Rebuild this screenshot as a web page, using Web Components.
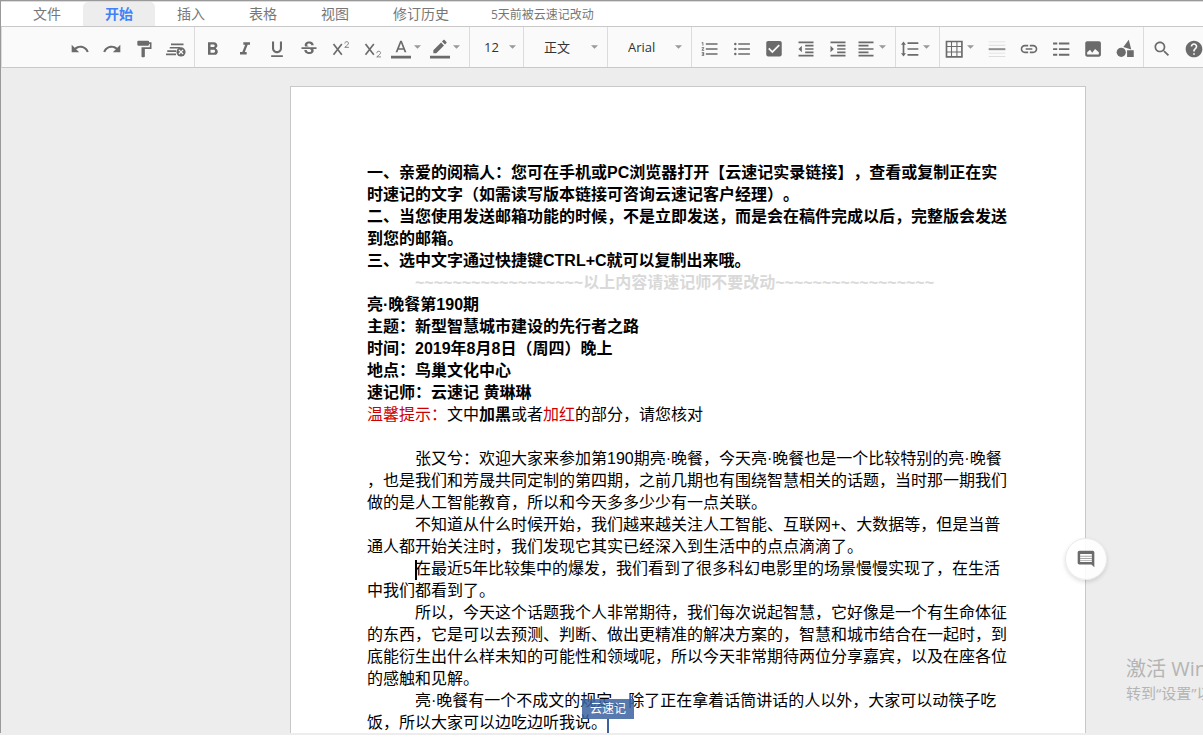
<!DOCTYPE html>
<html lang="zh-CN">
<head>
<meta charset="utf-8">
<title>亮·晚餐第190期</title>
<style>
  html, body {
    height: 100%;
    margin: 0;
  }

  body {
    overflow: hidden;
    font-family: "Open Sans", "Noto Sans CJK SC", sans-serif;
    text-spacing-trim: space-all;
    text-autospace: no-autospace;
  }
</style>
</head>
<body>
<doc-app></doc-app>

<script>
const ICONS = {
  undo: `<path d="M12.5 8c-2.65 0-5.05.99-6.9 2.6L2 7v9h9l-3.62-3.62c1.39-1.16 3.16-1.88 5.12-1.88 3.54 0 6.55 2.31 7.6 5.5l2.37-.78C21.08 11.03 17.15 8 12.5 8z"/>`,
  redo: `<path d="M18.4 10.6C16.55 8.99 14.15 8 11.5 8c-4.65 0-8.58 3.03-9.96 7.22L3.9 16c1.05-3.19 4.05-5.5 7.6-5.5 1.95 0 3.73.72 5.12 1.88L13 16h9V7l-3.6 3.6z"/>`,
  paint: `<path d="M18 4V3c0-.55-.45-1-1-1H5c-.55 0-1 .45-1 1v4c0 .55.45 1 1 1h12c.55 0 1-.45 1-1V6h1v4H9v11c0 .55.45 1 1 1h2c.55 0 1-.45 1-1v-9h8V4h-3z"/>`,
  clear: `<path d="M6 5.500h15v2H6zM4.500 9.500H17v2H4.500zM1.500 13.500H12v2H1.500zM0 17.500h12v2H0z"/><circle cx="18" cy="15.500" r="5.500"/><path d="M15.500 13l5 5m0-5l-5 5" stroke="#fafafa" stroke-width="1.500"/>`,
  bold: `<path d="M15.600 10.790c.97-.67 1.650-1.770 1.650-2.790 0-2.260-1.750-4-4-4H6v15h8.040c2.090 0 3.710-1.700 3.710-3.790 0-1.520-.86-2.820-2.150-3.420zM9 6.500h3.500c.83 0 1.500.67 1.500 1.500s-.67 1.500-1.500 1.500H9v-3zm4 10H9v-3.500h4c.83 0 1.500.67 1.500 1.750s-.67 1.750-1.500 1.750z"/>`,
  italic: `<path d="M10 4v3h2.210l-3.420 8.500H6v3h8v-3h-2.210l3.420-8.500H18V4z"/>`,
  underline: `<path d="M12 17c3.310 0 6-2.690 6-6V3h-2.500v8c0 1.930-1.570 3.500-3.500 3.500S8.500 12.930 8.500 11V3H6v8c0 3.310 2.690 6 6 6zm-7 2.500v2.200h14v-2.200H5z"/>`,
  strike: `<path d="M7.240 8.750c-.26-.48-.39-1.030-.39-1.670 0-.61.130-1.160.4-1.670.26-.5.630-.93 1.110-1.290.48-.35 1.050-.63 1.700-.83.66-.19 1.390-.29 2.180-.29.81 0 1.540.110 2.210.34.66.22 1.230.54 1.690.94.47.4.830.88 1.080 1.430s.38 1.150.38 1.810h-3.010c0-.31-.05-.59-.15-.85-.09-.27-.24-.49-.44-.68-.2-.19-.45-.33-.75-.44-.3-.1-.66-.16-1.060-.16-.39 0-.74.04-1.030.13s-.53.21-.72.36c-.19.16-.34.34-.44.55-.1.210-.15.430-.15.660 0 .48.25.88.74 1.210.38.250.770.480 1.410.7H7.390c-.05-.08-.11-.17-.15-.25zM21 12v-2H3v2h9.620c.18.070.4.140.55.200.37.170.660.340.870.510s.350.360.430.570c.070.200.110.430.110.690 0 .23-.05.45-.14.660-.09.200-.23.380-.42.530-.19.150-.42.260-.71.350-.29.080-.63.130-1.010.130-.43 0-.83-.04-1.180-.13s-.66-.23-.91-.42c-.25-.19-.45-.44-.59-.75s-.25-.76-.25-1.210H6.400c0 .55.080 1.130.24 1.580s.37.850.65 1.210c.28.350.600.660.980.920.37.260.780.480 1.220.650.44.170.900.300 1.380.390.480.080.960.130 1.440.130.8 0 1.530-.09 2.180-.28s1.210-.45 1.670-.79c.46-.34.820-.77 1.070-1.270s.38-1.070.38-1.710c0-.6-.1-1.140-.31-1.610-.05-.11-.11-.23-.17-.33H21z"/>`,
  sup: `<path d="M3 6l10 13M13 6L3 19" fill="none" stroke="currentColor" stroke-width="2"/><path d="M16.500 5.500c0-3 4.500-3 4.500-.5 0 1.500-1.500 2.500-4.500 5h5" fill="none" stroke="currentColor"/>`,
  sub: `<path d="M3 6l10 13M13 6L3 19" fill="none" stroke="currentColor" stroke-width="2"/><path d="M16.500 17c0-3 4.500-3 4.500-.5 0 1.500-1.500 2.500-4.500 5h5" fill="none" stroke="currentColor"/>`,
  color: `<path d="M0 20h24v3.500H0zM11 2L5.500 16h2.250l1.120-3h6.250l1.120 3h2.250L13 2h-2zm-1.380 9L12 4.670 14.380 11H9.620z"/>`,
  marker: `<path d="M0 20h24v3.500H0zM4 13.500V17h3.500l9.300-9.300-3.500-3.500zM19.700 4.900c.4-.4.4-1 0-1.400l-2.200-2.200c-.4-.4-1-.4-1.400 0l-1.700 1.700 3.600 3.600z"/>`,
  ordered: `<path d="M2 17h2v.5H3v1h1v.5H2v1h3v-4H2v1zm1-9h1V4H2v1h1v3zm-1 3h1.800L2 13.100v.9h3v-1H3.200L5 10.900V10H2v1zm5-6v2h14V5H7zm0 14h14v-2H7v2zm0-6h14v-2H7v2z"/>`,
  bullets: `<circle cx="4" cy="6" r="1.500"/><circle cx="4" cy="12" r="1.500"/><circle cx="4" cy="18" r="1.500"/><path d="M7.500 5h14v2h-14zM7.500 11h14v2h-14zM7.500 17h14v2h-14z"/>`,
  check: `<path d="M19 2.500H5c-1.300 0-2.300 1-2.300 2.200v14c0 1.300 1 2.300 2.300 2.300h14c1.300 0 2.300-1 2.300-2.300v-14c0-1.200-1-2.200-2.300-2.200zM10 17l-5-5 1.410-1.410L10 14.170l7.590-7.590L19 8l-9 9z"/>`,
  outdent: `<path d="M11 17h10v-2H11v2zm-8-5l4 4V8l-4 4zm0 9h18v-2H3v2zM3 3v2h18V3H3zm8 6h10V7H11v2zm0 4h10v-2H11v2z"/>`,
  indent: `<path d="M3 21h18v-2H3v2zM3 8v8l4-4-4-4zm8 9h10v-2H11v2zM3 3v2h18V3H3zm8 6h10V7H11v2zm0 4h10v-2H11v2z"/>`,
  align: `<path d="M15 15H3v2h12v-2zm0-8H3v2h12V7zM3 13h18v-2H3v2zm0 8h18v-2H3v2zM3 3v2h18V3H3z"/>`,
  spacing: `<path d="M5.200 7h2L4.200 3l-3 4h2v10h-2l3 4 3-4h-2zM9 4h13v2H9zM9 11h13v2H9zM9 18h13v2H9z"/>`,
  table: `<path d="M3 3h18.500v18.500H3z" fill="none" stroke="currentColor" stroke-width="2"/><path d="M3 9h18.500M3 15.500h18.500M9 3v18.500M15.500 3v18.500" fill="none" stroke="currentColor" stroke-width="1.300"/>`,
  rule: `<path d="M2 11h20v2.400H2z" opacity=".75"/><path d="M2 3h20v1H2zM2 7h20v1H2zM2 16.500h20v1H2zM2 20.500h20v1H2z" opacity=".2"/>`,
  link: `<path d="M3.900 12c0-1.710 1.390-3.100 3.100-3.100h4V7H7c-2.760 0-5 2.240-5 5s2.240 5 5 5h4v-1.900H7c-1.710 0-3.100-1.390-3.100-3.100zM8 13h8v-2H8v2zm9-6h-4v1.900h4c1.710 0 3.100 1.390 3.100 3.100s-1.390 3.100-3.100 3.100h-4V17h4c2.760 0 5-2.240 5-5s-2.240-5-5-5z"/>`,
  catalog: `<path d="M2.500 4.200h5v2.300h-5zM9.500 4.200H22v2.300H9.500zM2.500 11h5v2.300h-5zM9.500 11H22v2.300H9.500zM2.500 17.800h5v2.300h-5zM9.500 17.800H22v2.300H9.500z"/>`,
  image: `<path fill-rule="evenodd" d="M21.500 19V5c0-1.300-1-2.300-2.300-2.300H5C3.700 2.700 2.700 3.700 2.700 5v14c0 1.300 1 2.300 2.300 2.300h14.200c1.300 0 2.300-1 2.300-2.300zM5 18.500v-2.500l3.500-3 2.500 3.500 3.500-4.500L19 16v2.500z"/>`,
  shapes: `<path d="M16.500 1l3 11.500L10 9.500zM14.500 13.500h8v8h-8z"/><circle cx="7.500" cy="16" r="5.500"/>`,
  search: `<path d="M15.500 14h-.79l-.28-.27C15.410 12.590 16 11.110 16 9.500 16 5.910 13.090 3 9.500 3S3 5.910 3 9.500 5.910 16 9.500 16c1.610 0 3.090-.59 4.230-1.570l.27.28v.79l5 4.990L20.490 19l-4.990-5zm-6 0C7.010 14 5 11.990 5 9.500S7.010 5 9.500 5 14 7.010 14 9.500 11.990 14 9.500 14z"/>`,
  help: `<path d="M12 2C6.480 2 2 6.480 2 12s4.480 10 10 10 10-4.480 10-10S17.520 2 12 2zm1 17h-2v-2h2v2zm2.070-7.750l-.9.920C13.450 12.900 13 13.500 13 15h-2v-.5c0-1.100.45-2.100 1.170-2.830l1.240-1.260c.37-.36.590-.86.590-1.410 0-1.100-.9-2-2-2s-2 .9-2 2H8c0-2.210 1.790-4 4-4s4 1.790 4 4c0 .88-.36 1.680-.93 2.250z"/>`,
  comment: `<path fill-rule="evenodd" d="M22 4c0-1.100-.9-2-2-2H4c-1.100 0-2 .9-2 2v12.500c0 1.100.9 2 2 2h14.500L22 22zM19 6v9.500H5V6z"/><path d="M5 8h14v1.300H5zM5 10.800h14v1.300H5zM5 13.500h14v1H5z" opacity=".6"/>`
};

const CARET = `<svg class="caret" viewBox="0 0 8 4" aria-hidden="true"><path d="M0 0h8L4 4z"/></svg>`;

class DocTabs extends HTMLElement {
  constructor() {
    super();
    this.attachShadow({ mode: "open" });
  }

  static get styles() {
    return /* css */`
      :host {
        display: flex;
        align-items: stretch;
        height: 24px;
        padding-left: 10px;
        background: #fff;
        border-bottom: 1px solid #c8c8c8;
        white-space: nowrap;
      }

      button {
        border: 0;
        margin: 0;
        padding: 0 22px;
        background: none;
        color: #777;
        font: 14px/24px "Open Sans", "Noto Sans CJK SC", sans-serif;
        cursor: pointer;
      }

      button[aria-selected="true"] {
        background: #ededed;
        border-radius: 5px 5px 0 0;
        color: #3f82f8;
        font-weight: 700;
      }

      nav {
        display: flex;
      }

      span {
        margin-left: 20px;
        color: #777;
        font-size: 12px;
        line-height: 26px;
      }
    `;
  }

  connectedCallback() {
    const tabs = ["文件", "开始", "插入", "表格", "视图", "修订历史"];
    this.shadowRoot.innerHTML = /* html */`
    <style>${DocTabs.styles}</style>
    <nav role="tablist">
      ${tabs.map((t) => `<button role="tab" aria-selected="${t === "开始"}">${t}</button>`).join("")}
    </nav>
    <span><slot></slot></span>`;
  }
}

customElements.define("doc-tabs", DocTabs);

class ToolGroup extends HTMLElement {
  constructor() {
    super();
    this.attachShadow({ mode: "open" });
  }

  connectedCallback() {
    this.shadowRoot.innerHTML = /* html */`
    <style>
      :host {
        display: flex;
        flex: none;
        padding: 0 2px;
        border-right: 1px solid #dcdcdc;
      }

      :host([flush]) {
        padding: 0;
      }

      :host([first]) {
        padding-left: 62px;
      }

      :host(:last-of-type) {
        border-right: 0;
      }
    </style>
    <slot></slot>`;
  }
}

customElements.define("tool-group", ToolGroup);

class ToolButton extends HTMLElement {
  constructor() {
    super();
    this.attachShadow({ mode: "open" });
  }

  static get styles() {
    return /* css */`
      :host {
        display: flex;
      }

      button {
        display: flex;
        align-items: center;
        justify-content: center;
        gap: 3px;
        width: 32px;
        padding: 4px 0 0;
        border: 0;
        background: none;
        color: #6b6b6b;
        cursor: pointer;
      }

      :host([menu]) button {
        justify-content: flex-start;
        width: 39px;
        padding-left: 2px;
      }

      svg {
        flex: none;
        width: 20px;
        height: 20px;
        fill: currentColor;
      }

      .caret {
        width: 7px;
        height: 4px;
        margin-bottom: 4px;
        fill: #999;
      }
    `;
  }

  connectedCallback() {
    const label = this.getAttribute("label");
    this.shadowRoot.innerHTML = /* html */`
    <style>${ToolButton.styles}</style>
    <button aria-label="${label}">
      <svg viewBox="0 0 24 24" aria-hidden="true">${ICONS[this.getAttribute("icon")]}</svg>
      ${this.hasAttribute("menu") ? CARET : ""}
    </button>`;
  }
}

customElements.define("tool-button", ToolButton);

class ToolSelect extends HTMLElement {
  constructor() {
    super();
    this.attachShadow({ mode: "open" });
  }

  static get styles() {
    return /* css */`
      :host {
        display: grid;
        width: 83px;
      }

      :host([narrow]) {
        width: 53px;
      }

      select,
      .caret {
        grid-area: 1 / 1;
      }

      select {
        appearance: none;
        width: 100%;
        border: 0;
        margin: 0;
        padding: 0 0 0 20px;
        background: none;
        color: #333;
        font: 13px/20px "Open Sans", "Noto Sans CJK SC", sans-serif;
      }

      :host([narrow]) select {
        padding-left: 14px;
      }

      .caret {
        align-self: center;
        justify-self: end;
        width: 7px;
        height: 4px;
        margin-right: 9px;
        fill: #999;
        pointer-events: none;
      }

      :host([narrow]) .caret {
        margin-right: 7px;
      }
    `;
  }

  connectedCallback() {
    this.shadowRoot.innerHTML = /* html */`
    <style>${ToolSelect.styles}</style>
    <select aria-label="${this.getAttribute("label")}"><option>${this.getAttribute("value")}</option></select>
    ${CARET}`;
  }
}

customElements.define("tool-select", ToolSelect);

class DocToolbar extends HTMLElement {
  constructor() {
    super();
    this.attachShadow({ mode: "open" });
  }

  static get styles() {
    return /* css */`
      :host {
        display: flex;
        height: 40px;
        overflow: hidden;
        background: #fafafa;
        border-left: 1px solid #dcdcdc;
        border-bottom: 1px solid #c8c8c8;
      }
    `;
  }

  connectedCallback() {
    this.shadowRoot.innerHTML = /* html */`
    <style>${DocToolbar.styles}</style>
    <tool-group first>
      <tool-button icon="undo" label="撤销"></tool-button>
      <tool-button icon="redo" label="重做"></tool-button>
      <tool-button icon="paint" label="格式刷"></tool-button>
      <tool-button icon="clear" label="清除格式"></tool-button>
    </tool-group>
    <tool-group>
      <tool-button icon="bold" label="加粗"></tool-button>
      <tool-button icon="italic" label="斜体"></tool-button>
      <tool-button icon="underline" label="下划线"></tool-button>
      <tool-button icon="strike" label="删除线"></tool-button>
      <tool-button icon="sup" label="上标"></tool-button>
      <tool-button icon="sub" label="下标"></tool-button>
      <tool-button icon="color" label="文字颜色" menu></tool-button>
      <tool-button icon="marker" label="背景颜色" menu></tool-button>
    </tool-group>
    <tool-group flush><tool-select narrow label="字号" value="12"></tool-select></tool-group>
    <tool-group flush><tool-select label="样式" value="正文"></tool-select></tool-group>
    <tool-group flush><tool-select label="字体" value="Arial"></tool-select></tool-group>
    <tool-group>
      <tool-button icon="ordered" label="有序列表"></tool-button>
      <tool-button icon="bullets" label="无序列表"></tool-button>
      <tool-button icon="check" label="任务列表"></tool-button>
      <tool-button icon="outdent" label="减少缩进"></tool-button>
      <tool-button icon="indent" label="增加缩进"></tool-button>
      <tool-button icon="align" label="对齐" menu></tool-button>
    </tool-group>
    <tool-group><tool-button icon="spacing" label="行距" menu></tool-button></tool-group>
    <tool-group>
      <tool-button icon="table" label="表格" menu></tool-button>
      <tool-button icon="rule" label="分隔线"></tool-button>
      <tool-button icon="link" label="链接"></tool-button>
      <tool-button icon="catalog" label="目录"></tool-button>
      <tool-button icon="image" label="图片"></tool-button>
      <tool-button icon="shapes" label="形状"></tool-button>
    </tool-group>
    <tool-group>
      <tool-button icon="search" label="查找"></tool-button>
      <tool-button icon="help" label="帮助"></tool-button>
    </tool-group>`;
  }
}

customElements.define("doc-toolbar", DocToolbar);

class RemoteCursor extends HTMLElement {
  constructor() {
    super();
    this.attachShadow({ mode: "open" });
  }

  connectedCallback() {
    this.shadowRoot.innerHTML = /* html */`
    <style>
      :host {
        display: inline-block;
        position: relative;
        width: 2px;
        height: 15px;
        vertical-align: bottom;
        background: #3a62a0;
        text-indent: 0;
      }

      span {
        position: absolute;
        bottom: 100%;
        left: 50%;
        transform: translateX(-50%);
        padding: 0 8px;
        background: #3a62a0d9;
        color: #fff;
        font: 12px/20px "Open Sans", "Noto Sans CJK SC", sans-serif;
        white-space: nowrap;
      }
    </style>
    <span><slot></slot></span>`;
  }
}

customElements.define("remote-cursor", RemoteCursor);

class DocPage extends HTMLElement {
  constructor() {
    super();
    this.attachShadow({ mode: "open" });
  }

  static get styles() {
    return /* css */`
      :host {
        display: block;
        box-sizing: border-box;
        width: 100%;
        max-width: 796px;
        margin: 18px auto 0;
        padding: 75px 76px;
        background: #fff;
        border: 1px solid #c8c8c8;
        color: #000;
        font: 16px/22px "Liberation Sans", "Noto Sans CJK SC", sans-serif;
        line-break: anywhere;
      }

      p {
        margin: 0;
        min-height: 22px;
      }

      .body {
        text-indent: 48px;
      }

      .notice {
        color: #d9d9d9;
        text-indent: 48px;
        font-weight: 700;
      }

      .red {
        color: #cc0000;
      }

      .caret {
        display: inline-block;
        width: 2px;
        height: 20px;
        margin-right: -2px;
        background: #000;
        vertical-align: middle;
      }
    `;
  }

  connectedCallback() {
    this.shadowRoot.innerHTML = /* html */`
    <style>${DocPage.styles}</style>
    <p><b>一、亲爱的阅稿人：您可在手机或PC浏览器打开【云速记实录链接】，查看或复制正在实时速记的文字（如需读写版本链接可咨询云速记客户经理）。</b></p>
    <p><b>二、当您使用发送邮箱功能的时候，不是立即发送，而是会在稿件完成以后，完整版会发送到您的邮箱。</b></p>
    <p><b>三、选中文字通过快捷键CTRL+C就可以复制出来哦。</b></p>
    <p class="notice">~~~~~~~~~~~~~~~~~~以上内容请速记师不要改动~~~~~~~~~~~~~~~~~</p>
    <p><b>亮·晚餐第190期</b></p>
    <p><b>主题：新型智慧城市建设的先行者之路</b></p>
    <p><b>时间：2019年8月8日（周四）晚上</b></p>
    <p><b>地点：鸟巢文化中心</b></p>
    <p><b>速记师：云速记 黄琳琳</b></p>
    <p><span class="red">温馨提示：</span>文中<b>加黑</b>或者<span class="red">加红</span>的部分，请您核对</p>
    <p></p>
    <p class="body">张又兮：欢迎大家来参加第190期亮·晚餐，今天亮·晚餐也是一个比较特别的亮·晚餐，也是我们和芳晟共同定制的第四期，之前几期也有围绕智慧相关的话题，当时那一期我们做的是人工智能教育，所以和今天多多少少有一点关联。</p>
    <p class="body">不知道从什么时候开始，我们越来越关注人工智能、互联网+、大数据等，但是当普通人都开始关注时，我们发现它其实已经深入到生活中的点点滴滴了。</p>
    <p class="body"><span class="caret"></span>在最近5年比较集中的爆发，我们看到了很多科幻电影里的场景慢慢实现了，在生活中我们都看到了。</p>
    <p class="body">所以，今天这个话题我个人非常期待，我们每次说起智慧，它好像是一个有生命体征的东西，它是可以去预测、判断、做出更精准的解决方案的，智慧和城市结合在一起时，到底能衍生出什么样未知的可能性和领域呢，所以今天非常期待两位分享嘉宾，以及在座各位的感触和见解。</p>
    <p class="body">亮·晚餐有一个不成文的规定，除了正在拿着话筒讲话的人以外，大家可以动筷子吃饭，所以大家可以边吃边听我说。<remote-cursor>云速记</remote-cursor></p>`;
  }
}

customElements.define("doc-page", DocPage);

class CommentButton extends HTMLElement {
  constructor() {
    super();
    this.attachShadow({ mode: "open" });
  }

  connectedCallback() {
    this.shadowRoot.innerHTML = /* html */`
    <style>
      :host {
        display: block;
      }

      button {
        display: grid;
        place-items: center;
        width: 42px;
        height: 42px;
        padding: 0;
        border: 1px solid #eaeaea;
        border-radius: 50%;
        background: #ffffffe0;
        box-shadow: 0 2px 4px #0002;
        color: #6b6b6b;
      }

      svg {
        width: 20px;
        height: 20px;
        fill: currentColor;
      }
    </style>
    <button aria-label="评论"><svg viewBox="0 0 24 24" aria-hidden="true">${ICONS.comment}</svg></button>`;
  }
}

customElements.define("comment-button", CommentButton);

class ActivationNote extends HTMLElement {
  constructor() {
    super();
    this.attachShadow({ mode: "open" });
  }

  connectedCallback() {
    this.shadowRoot.innerHTML = /* html */`
    <style>
      :host {
        display: block;
        color: #b4b4b4;
        font-size: 15px;
        line-height: 20px;
        white-space: nowrap;
      }

      strong {
        display: block;
        font-size: 20px;
        font-weight: 400;
        line-height: 28px;
      }
    </style>
    <strong><slot name="title"></slot></strong>
    <slot></slot>`;
  }
}

customElements.define("activation-note", ActivationNote);

class DocApp extends HTMLElement {
  constructor() {
    super();
    this.attachShadow({ mode: "open" });
  }

  static get styles() {
    return /* css */`
      :host {
        display: flex;
        flex-direction: column;
        box-sizing: border-box;
        height: 100%;
        position: relative;
        overflow: hidden;
        border-top: 1px solid #999;
        border-bottom: 2px solid #fff;
        background: #ededed;
      }

      .window {
        flex: 1;
        display: flex;
        flex-direction: column;
        min-height: 0;
        border-left: 1px solid #999;
      }

      doc-tabs {
        border-top: 1px solid #dcdcdc;
        flex: none;
      }

      doc-toolbar {
        flex: none;
      }

      main {
        flex: 1;
        min-height: 0;
        overflow: hidden;
        padding-right: 30px;
        padding-left: 202px;
      }

      footer {
        flex: none;
        height: 2px;
      }

      comment-button {
        position: absolute;
        right: 96px;
        bottom: 155px;
      }

      activation-note {
        position: absolute;
        left: calc(100% - 77px);
        bottom: 32px;
      }
    `;
  }

  connectedCallback() {
    this.shadowRoot.innerHTML = /* html */`
    <style>${DocApp.styles}</style>
    <div class="window">
      <doc-tabs>5天前被云速记改动</doc-tabs>
      <doc-toolbar></doc-toolbar>
      <main><doc-page></doc-page></main>
    </div>
    <footer></footer>
    <comment-button></comment-button>
    <activation-note><span slot="title">激活 Windows</span>转到“设置”以激活 Windows。</activation-note>`;
  }
}

customElements.define("doc-app", DocApp);
</script>
</body>
</html>
